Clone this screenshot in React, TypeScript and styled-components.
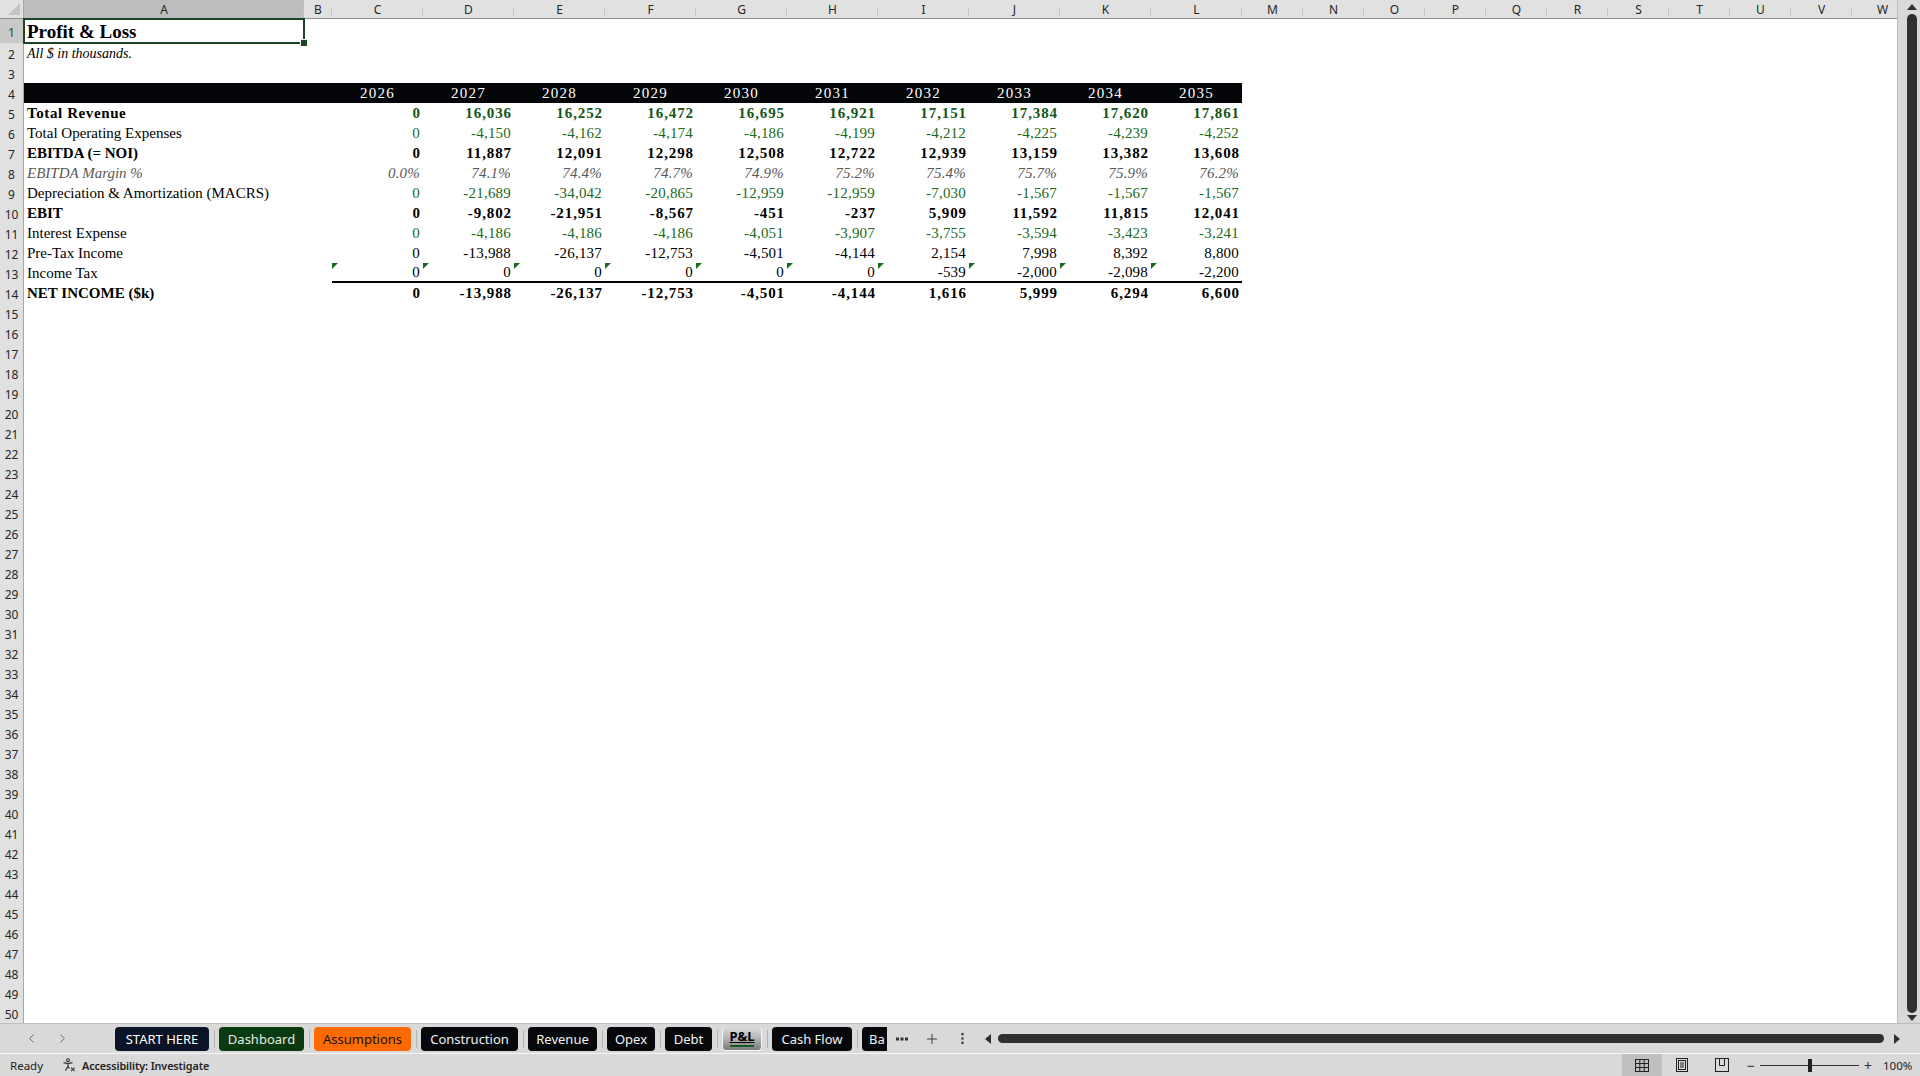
import React from "react";
import styled, { createGlobalStyle, css } from "styled-components";
import { ChevronLeft, ChevronRight, Plus, EllipsisVertical } from "lucide-react";

const GlobalStyle = createGlobalStyle`
  html, body {
    margin: 0;
    padding: 0;
    height: 100%;
    overflow: hidden;
  }
  body {
    background: #d9d9d9;
    font-family: "Noto Sans", "Liberation Sans", sans-serif;
  }
`;

type Tone = "green" | "black" | "gray";

interface Line {
  label: string;
  values: string[];
  tone: Tone;
  bold?: boolean;
  italic?: boolean;
  flagged?: boolean;
  ruled?: boolean;
}

const COLS = "ABCDEFGHIJKLMNOPQRSTUVW".split("");
const YEARS = ["2026", "2027", "2028", "2029", "2030", "2031", "2032", "2033", "2034", "2035"];
const COL_TEMPLATE = "24px 280px 28px repeat(10, 91px) repeat(11, 61px)";

const LINES: Line[] = [
  {
    label: "Total Revenue",
    tone: "green",
    bold: true,
    values: ["0", "16,036", "16,252", "16,472", "16,695", "16,921", "17,151", "17,384", "17,620", "17,861"],
  },
  {
    label: "Total Operating Expenses",
    tone: "green",
    values: ["0", "-4,150", "-4,162", "-4,174", "-4,186", "-4,199", "-4,212", "-4,225", "-4,239", "-4,252"],
  },
  {
    label: "EBITDA (= NOI)",
    tone: "black",
    bold: true,
    values: ["0", "11,887", "12,091", "12,298", "12,508", "12,722", "12,939", "13,159", "13,382", "13,608"],
  },
  {
    label: "EBITDA Margin %",
    tone: "gray",
    italic: true,
    values: ["0.0%", "74.1%", "74.4%", "74.7%", "74.9%", "75.2%", "75.4%", "75.7%", "75.9%", "76.2%"],
  },
  {
    label: "Depreciation & Amortization (MACRS)",
    tone: "green",
    values: ["0", "-21,689", "-34,042", "-20,865", "-12,959", "-12,959", "-7,030", "-1,567", "-1,567", "-1,567"],
  },
  {
    label: "EBIT",
    tone: "black",
    bold: true,
    values: ["0", "-9,802", "-21,951", "-8,567", "-451", "-237", "5,909", "11,592", "11,815", "12,041"],
  },
  {
    label: "Interest Expense",
    tone: "green",
    values: ["0", "-4,186", "-4,186", "-4,186", "-4,051", "-3,907", "-3,755", "-3,594", "-3,423", "-3,241"],
  },
  {
    label: "Pre-Tax Income",
    tone: "black",
    values: ["0", "-13,988", "-26,137", "-12,753", "-4,501", "-4,144", "2,154", "7,998", "8,392", "8,800"],
  },
  {
    label: "Income Tax",
    tone: "black",
    flagged: true,
    ruled: true,
    values: ["0", "0", "0", "0", "0", "0", "-539", "-2,000", "-2,098", "-2,200"],
  },
  {
    label: "NET INCOME ($k)",
    tone: "black",
    bold: true,
    values: ["0", "-13,988", "-26,137", "-12,753", "-4,501", "-4,144", "1,616", "5,999", "6,294", "6,600"],
  },
];

type TabKind = "navy" | "green" | "orange" | "dark" | "active" | "cut";

const TABS: { name: string; kind: TabKind; width: number }[] = [
  { name: "START HERE", kind: "navy", width: 94 },
  { name: "Dashboard", kind: "green", width: 85 },
  { name: "Assumptions", kind: "orange", width: 97 },
  { name: "Construction", kind: "dark", width: 97 },
  { name: "Revenue", kind: "dark", width: 69 },
  { name: "Opex", kind: "dark", width: 48 },
  { name: "Debt", kind: "dark", width: 47 },
  { name: "P&L", kind: "active", width: 40 },
  { name: "Cash Flow", kind: "dark", width: 80 },
  { name: "Ba", kind: "cut", width: 25 },
];

const toneColor = (tone: Tone | undefined, bold?: boolean) => {
  if (tone === "green") return bold ? "#165516" : "#1c6a1c";
  if (tone === "gray") return "#595959";
  return "#000";
};

function App() {
  const rows = Array.from({ length: 50 }, (_, i) => i + 1);

  const renderCells = (r: number) => {
    if (r === 1) {
      return (
        <>
          <Cell $size={19} $bold $selected>
            Profit &amp; Loss
            <FillHandle />
          </Cell>
          {COLS.slice(1).map((c) => (
            <Cell key={c} />
          ))}
        </>
      );
    }
    if (r === 2) {
      return (
        <>
          <Cell $italic $size={14}>
            All $ in thousands.
          </Cell>
          {COLS.slice(1).map((c) => (
            <Cell key={c} />
          ))}
        </>
      );
    }
    if (r === 4) {
      return (
        <>
          <Cell $band />
          <Cell $band />
          {YEARS.map((y) => (
            <Cell key={y} $band $align="center" $year>
              {y}
            </Cell>
          ))}
          {COLS.slice(12).map((c) => (
            <Cell key={c} />
          ))}
        </>
      );
    }
    const line = r >= 5 && r <= 14 ? LINES[r - 5] : null;
    if (line) {
      return (
        <>
          <Cell
            $bold={line.bold}
            $italic={line.italic}
            $wide={line.label === "Total Revenue"}
            $tone={line.tone === "gray" ? "gray" : "black"}
          >
            {line.label}
          </Cell>
          <Cell />
          {line.values.map((v, i) => (
            <Cell
              key={i}
              $align="right"
              $num
              $tone={line.tone}
              $bold={line.bold}
              $italic={line.italic}
              $flag={line.flagged}
              $rule={line.ruled}
            >
              {v}
            </Cell>
          ))}
          {COLS.slice(12).map((c) => (
            <Cell key={c} />
          ))}
        </>
      );
    }
    return COLS.map((c) => <Cell key={c} />);
  };

  return (
    <>
      <GlobalStyle />
      <Window>
        <SheetArea>
          <Sheet>
            <SheetRow $h={19}>
              <Corner />
              {COLS.map((c) => (
                <ColHead key={c} $active={c === "A"}>
                  {c}
                </ColHead>
              ))}
            </SheetRow>
            {rows.map((r) => (
              <SheetRow key={r} $h={r === 1 ? 24 : 20}>
                <RowHead $active={r === 1}>{r}</RowHead>
                {renderCells(r)}
              </SheetRow>
            ))}
          </Sheet>
          <VScroll>
            <Arrow $dir="up" />
            <VThumb />
            <Arrow $dir="down" />
          </VScroll>
        </SheetArea>

        <TabBar>
          <NavButton>
            <ChevronLeft size={15} strokeWidth={1.6} />
          </NavButton>
          <NavButton>
            <ChevronRight size={15} strokeWidth={1.6} />
          </NavButton>
          <Tabs>
            {TABS.map((t, i) => (
              <React.Fragment key={t.name}>
                {i > 0 && <TabDivider />}
                <Tab $kind={t.kind} $w={t.width}>
                  <span>{t.name}</span>
                </Tab>
              </React.Fragment>
            ))}
          </Tabs>
          <BarButton>
            <svg width="12" height="4" viewBox="0 0 12 4">
              <rect x="0" y="0.5" width="3" height="3" fill="#333" />
              <rect x="4.5" y="0.5" width="3" height="3" fill="#333" />
              <rect x="9" y="0.5" width="3" height="3" fill="#333" />
            </svg>
          </BarButton>
          <BarButton>
            <Plus size={16} strokeWidth={1.4} color="#333" />
          </BarButton>
          <BarButton>
            <EllipsisVertical size={15} strokeWidth={2.2} color="#444" />
          </BarButton>
          <HScroll>
            <Arrow $dir="left" />
            <HThumb />
            <Arrow $dir="right" />
          </HScroll>
        </TabBar>

        <StatusBar>
          <StatusText>Ready</StatusText>
          <Accessibility>
            <svg width="14" height="14" viewBox="0 0 14 14" fill="none" stroke="#333" strokeWidth="1.1">
              <circle cx="6" cy="2.2" r="1.4" />
              <path d="M1.5 4.6 L6 5.6 L10.5 4.6" />
              <path d="M6 5.6 V8.4 L3.4 12.6" />
              <path d="M6 8.4 L7.4 10.6" />
              <path d="M9 9.6 L12.6 13.2 M12.6 9.6 L9 13.2" />
            </svg>
            <strong>Accessibility: Investigate</strong>
          </Accessibility>
          <StatusRight>
            <ViewButton $active>
              <svg width="14" height="13" viewBox="0 0 14 13" fill="none" stroke="#222" strokeWidth="1">
                <rect x="0.5" y="0.5" width="13" height="12" />
                <path d="M4.8 0.5 V12.5 M9.2 0.5 V12.5 M0.5 4.5 H13.5 M0.5 8.5 H13.5" />
              </svg>
            </ViewButton>
            <ViewButton>
              <svg width="14" height="14" viewBox="0 0 14 14" fill="none" stroke="#222" strokeWidth="1">
                <rect x="1.5" y="0.5" width="11" height="13" />
                <rect x="3.5" y="2.5" width="7" height="9" />
                <path d="M5 5 H9 M5 7 H9 M5 9 H9" />
              </svg>
            </ViewButton>
            <ViewButton>
              <svg width="14" height="14" viewBox="0 0 14 14" fill="none" stroke="#222" strokeWidth="1">
                <rect x="0.5" y="0.5" width="13" height="13" />
                <path d="M4.5 0.5 V7.5 H9.5 V0.5" />
              </svg>
            </ViewButton>
            <ZoomSign>−</ZoomSign>
            <Slider>
              <SliderKnob />
            </Slider>
            <ZoomSign>+</ZoomSign>
            <ZoomValue>100%</ZoomValue>
          </StatusRight>
        </StatusBar>
      </Window>
    </>
  );
}

const Window = styled.div`
  width: 1920px;
  height: 1076px;
  display: flex;
  flex-direction: column;
  background: #d9d9d9;
  overflow: hidden;
`;

const SheetArea = styled.div`
  height: 1023px;
  display: flex;
  flex-shrink: 0;
`;

const Sheet = styled.div`
  width: 1898px;
  height: 1023px;
  overflow: hidden;
  background: #fff;
  border-right: 1px solid #bdbdbd;
  box-sizing: border-box;
`;

const SheetRow = styled.div<{ $h: number }>`
  display: grid;
  grid-template-columns: ${COL_TEMPLATE};
  height: ${(p) => p.$h}px;
`;

const headFont = css`
  font-family: "Noto Sans", "Liberation Sans", sans-serif;
  font-size: 12px;
  color: #262626;
`;

const Corner = styled.div`
  background: #e1e1e1;
  border-right: 1px solid #a6a6a6;
  border-bottom: 1px solid #8f8f8f;
  box-sizing: border-box;
  position: relative;
  &::after {
    content: "";
    position: absolute;
    right: 3px;
    bottom: 3px;
    border-left: 12px solid transparent;
    border-bottom: 12px solid #c3c3c3;
  }
`;

const ColHead = styled.div<{ $active?: boolean }>`
  ${headFont};
  position: relative;
  display: flex;
  align-items: center;
  justify-content: center;
  background: ${(p) => (p.$active ? "#bdbdbd" : "#e1e1e1")};
  border-bottom: 1px solid ${(p) => (p.$active ? "#1d4d2b" : "#8f8f8f")};
  box-sizing: border-box;
  line-height: 1;
  padding-top: 1px;
  &::after {
    content: "";
    position: absolute;
    right: 0;
    top: 8px;
    bottom: 2px;
    width: 1px;
    background: #c4c4c4;
  }
`;

const RowHead = styled.div<{ $active?: boolean }>`
  ${headFont};
  display: flex;
  align-items: center;
  justify-content: center;
  background: ${(p) => (p.$active ? "#c9c9c9" : "#e1e1e1")};
  color: ${(p) => (p.$active ? "#1d4d2b" : "#262626")};
  border-right: 1px solid #a6a6a6;
  box-sizing: border-box;
  padding-top: 2px;
`;

interface CellProps {
  $align?: "left" | "right" | "center";
  $tone?: Tone;
  $bold?: boolean;
  $italic?: boolean;
  $band?: boolean;
  $rule?: boolean;
  $flag?: boolean;
  $size?: number;
  $num?: boolean;
  $year?: boolean;
  $wide?: boolean;
  $selected?: boolean;
}

const Cell = styled.div<CellProps>`
  position: relative;
  display: flex;
  align-items: center;
  justify-content: ${(p) => (p.$align === "right" ? "flex-end" : p.$align === "center" ? "center" : "flex-start")};
  padding: 1px ${(p) => (p.$num && p.$bold ? 2 : 3)}px 0 3px;
  box-sizing: border-box;
  font-family: "Liberation Serif", "Times New Roman", serif;
  font-size: ${(p) => p.$size ?? 15}px;
  font-weight: ${(p) => (p.$bold ? 700 : 400)};
  font-style: ${(p) => (p.$italic ? "italic" : "normal")};
  color: ${(p) => (p.$year ? "#fff" : toneColor(p.$tone, p.$bold))};
  letter-spacing: ${(p) =>
    p.$year ? 1.3 : p.$num && p.$bold ? 0.9 : p.$num ? 0.2 : p.$wide ? 0.6 : 0}px;
  white-space: nowrap;
  background: ${(p) => (p.$band ? "#030508" : "transparent")};
  border-bottom: ${(p) => (p.$rule ? "2px solid #000" : "none")};
  z-index: ${(p) => (p.$selected ? 2 : "auto")};

  ${(p) =>
    p.$flag &&
    css`
      &::before {
        content: "";
        position: absolute;
        top: 0;
        left: 0;
        border-top: 6px solid #1b6b1b;
        border-right: 6px solid transparent;
      }
    `}

  ${(p) =>
    p.$selected &&
    css`
      &::after {
        content: "";
        position: absolute;
        inset: -1px -1px -1px -1px;
        border: 2px solid #1a4527;
        pointer-events: none;
      }
    `}
`;

const FillHandle = styled.span`
  position: absolute;
  right: -4px;
  bottom: -4px;
  width: 6px;
  height: 6px;
  background: #1a4527;
  border: 1px solid #fff;
  z-index: 3;
`;

const VScroll = styled.div`
  width: 22px;
  display: flex;
  flex-direction: column;
  align-items: center;
  padding: 4px 0 2px 6px;
  box-sizing: border-box;
`;

const VThumb = styled.div`
  flex: 1;
  width: 10px;
  margin: 4px 0 2px;
  border-radius: 5px;
  background: #2f2f2f;
`;

const HThumb = styled.div`
  flex: 1;
  height: 9px;
  margin: 0 10px 0 7px;
  border-radius: 5px;
  background: #2f2f2f;
`;

const Arrow = styled.div<{ $dir: "up" | "down" | "left" | "right" }>`
  width: 0;
  height: 0;
  flex-shrink: 0;
  ${(p) =>
    p.$dir === "up" &&
    css`
      border-left: 5px solid transparent;
      border-right: 5px solid transparent;
      border-bottom: 6px solid #2f2f2f;
    `}
  ${(p) =>
    p.$dir === "down" &&
    css`
      border-left: 5px solid transparent;
      border-right: 5px solid transparent;
      border-top: 6px solid #2f2f2f;
    `}
  ${(p) =>
    p.$dir === "left" &&
    css`
      border-top: 5px solid transparent;
      border-bottom: 5px solid transparent;
      border-right: 6px solid #2f2f2f;
      margin-left: 8px;
    `}
  ${(p) =>
    p.$dir === "right" &&
    css`
      border-top: 5px solid transparent;
      border-bottom: 5px solid transparent;
      border-left: 6px solid #2f2f2f;
    `}
`;

const TabBar = styled.div`
  height: 31px;
  flex-shrink: 0;
  display: flex;
  align-items: center;
  background: #d9d9d9;
  border-top: 1px solid #bdbdbd;
  border-bottom: 1px solid #f6f6f6;
  box-sizing: border-box;
`;

const NavButton = styled.div`
  width: 31px;
  display: flex;
  justify-content: center;
  color: #6a6a6a;
  &:first-child {
    margin-left: 16px;
  }
`;

const Tabs = styled.div`
  display: flex;
  align-items: center;
  margin-left: 37px;
`;

const TabDivider = styled.div`
  width: 1px;
  height: 18px;
  margin: 0 4px 0 5px;
  background: #b3b3b3;
`;

const tabSkins = {
  navy: css`
    background: #0b1426;
    color: #fff;
  `,
  green: css`
    background: #0c3a10;
    color: #e4ece4;
  `,
  orange: css`
    background: #ff6a00;
    color: #141414;
  `,
  dark: css`
    background: #06080c;
    color: #f2f2f2;
  `,
  active: css`
    background: linear-gradient(#dcdcdc 0%, #bdbdbd 40%, #7c7c7c 100%);
    color: #000;
    font-weight: 700;
    border: 1px solid #f4f4f4;
    border-top: none;
    text-decoration: underline;
    padding-bottom: 4px;
    &::after {
      content: "";
      position: absolute;
      left: 7px;
      right: 7px;
      bottom: 3px;
      height: 2px;
      background: #135c22;
    }
  `,
  cut: css`
    background: #06080c;
    color: #f2f2f2;
    padding-left: 7px;
    border-radius: 4px 0 0 4px;
    justify-content: flex-start;
  `,
};

const Tab = styled.div<{ $kind: TabKind; $w: number }>`
  position: relative;
  width: ${(p) => p.$w}px;
  height: 24px;
  flex-shrink: 0;
  display: flex;
  align-items: center;
  justify-content: center;
  box-sizing: border-box;
  border-radius: 4px;
  overflow: hidden;
  font-family: "Noto Sans", "Open Sans", sans-serif;
  font-size: 13px;
  white-space: nowrap;
  ${(p) => tabSkins[p.$kind]};
`;

const BarButton = styled.div`
  width: 30px;
  display: flex;
  justify-content: center;
  align-items: center;
`;

const HScroll = styled.div`
  flex: 1;
  display: flex;
  align-items: center;
  padding-right: 20px;
`;

const StatusBar = styled.div`
  flex: 1;
  display: flex;
  align-items: center;
  padding-left: 10px;
  font-family: "Noto Sans", "Liberation Sans", sans-serif;
  font-size: 11.5px;
  color: #222;
`;

const StatusText = styled.span`
  margin-right: 19px;
`;

const Accessibility = styled.div`
  display: flex;
  align-items: center;
  gap: 6px;
  strong {
    font-weight: 600;
    font-size: 10.8px;
    letter-spacing: -0.1px;
  }
`;

const StatusRight = styled.div`
  margin-left: auto;
  height: 100%;
  display: flex;
  align-items: center;
  padding-right: 8px;
`;

const ViewButton = styled.div<{ $active?: boolean }>`
  width: 40px;
  height: 100%;
  display: flex;
  align-items: center;
  justify-content: center;
  background: ${(p) => (p.$active ? "#bfbfbf" : "transparent")};
`;

const ZoomSign = styled.span`
  width: 18px;
  text-align: center;
  font-size: 14px;
  color: #333;
`;

const Slider = styled.div`
  position: relative;
  width: 99px;
  height: 1px;
  background: #333;
`;

const SliderKnob = styled.div`
  position: absolute;
  left: 48px;
  top: -6px;
  width: 4px;
  height: 13px;
  background: #222;
`;

const ZoomValue = styled.span`
  margin-left: 6px;
  width: 29px;
`;

export default App;
